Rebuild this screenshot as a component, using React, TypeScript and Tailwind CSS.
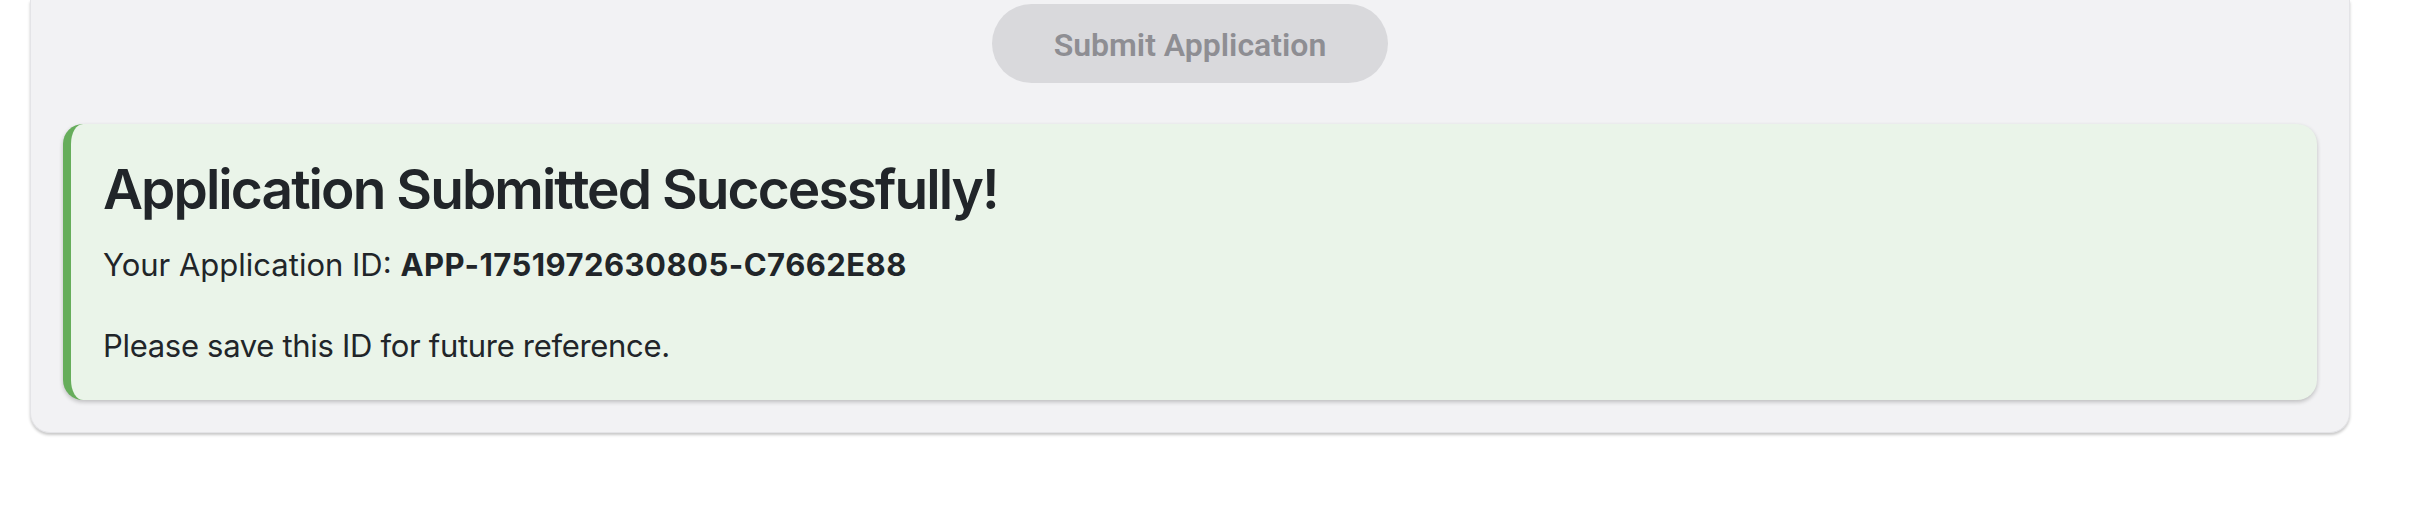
import React from "react";

export default function App() {
  return (
    <div className="min-h-screen w-full bg-white" style={{ fontFamily: "Inter, 'Noto Sans', sans-serif" }}>
      <div className="px-[30px] w-[2380px]">
        {/* Form panel (top is scrolled off screen) */}
        <div className="bg-[#f2f2f4] rounded-b-[20px] px-[32px] pt-[4px] pb-[32px] border-x border-b border-[#e4e4e7] shadow-[0_2px_3px_rgba(0,0,0,0.22)]">
          <div className="flex justify-center">
            <button
              disabled
              className="w-[396px] h-[79px] pt-[2px] rounded-full bg-[#d9d9dc] text-[#8e8e93] text-[32px] font-semibold cursor-not-allowed"
              style={{ fontFamily: "Roboto, 'Liberation Sans', sans-serif" }}
            >
              Submit Application
            </button>
          </div>

          {/* Success message */}
          <div className="mt-[41px] bg-[#eaf4e9] rounded-[20px] border-l-[8px] border-[#66ad5b] pl-[32px] pr-[32px] pt-[32px] pb-[30px] shadow-[0_2px_4px_rgba(0,0,0,0.22)] text-[#212529]">
            <h2 className="text-[55px] leading-[1.22] font-semibold tracking-[-0.035em] mb-[18px]">
              Application Submitted Successfully!
            </h2>
            <p className="text-[31px] leading-[1.55] mb-[33px]">
              Your Application ID: <strong className="font-bold tracking-[0.015em]">APP-1751972630805-C7662E88</strong>
            </p>
            <p className="text-[31px] leading-[1.55] tracking-[-0.01em]">Please save this ID for future reference.</p>
          </div>
        </div>
      </div>
    </div>
  );
}
